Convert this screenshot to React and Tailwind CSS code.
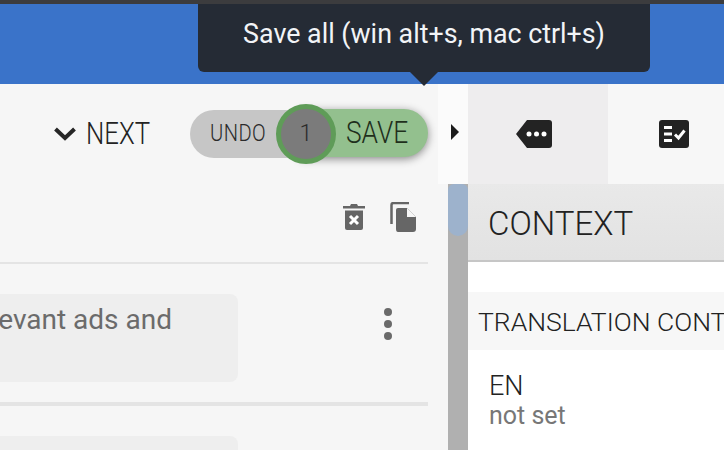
import React from "react";

const TagIcon = () => (
  <svg width="36" height="28" viewBox="0 0 36 28">
    <path d="M11 0H33Q36 0 36 3V25Q36 28 33 28H11L0 14Z" fill="#232323" />
    <circle cx="13" cy="14" r="2.500" fill="#fff" />
    <circle cx="20.500" cy="14" r="2.500" fill="#fff" />
    <circle cx="28" cy="14" r="2.500" fill="#fff" />
  </svg>
);

const ChecklistIcon = () => (
  <svg width="30" height="28" viewBox="0 0 30 28">
    <rect width="30" height="28" rx="3" fill="#232323" />
    <path d="M5 6H13V9H5ZM5 12.500H13V15.500H5ZM5 19H13V22H5Z" fill="#fff" />
    <path d="M16 14.500L19.500 18L25.500 10.500" fill="none" stroke="#fff" strokeWidth="3" />
  </svg>
);

const TrashIcon = () => (
  <svg width="22" height="28" viewBox="0 0 22 28">
    <path d="M0 4H7L8 2H14L15 4H22V6.500H0Z" fill="#666" />
    <path d="M2 8.500H20V26Q20 28 18 28H4Q2 28 2 26Z" fill="#666" />
    <path d="M7 14L15 22M15 14L7 22" stroke="#fff" strokeWidth="3" />
  </svg>
);

const CopyIcon = () => (
  <svg width="26" height="30" viewBox="0 0 26 30">
    <path d="M1.500 22V3Q1.500 1 3.500 1H19" fill="none" stroke="#666" strokeWidth="2.500" />
    <path d="M8 6H17L26 15V27Q26 30 23 30H8Q6 30 6 27V8Q6 6 8 6Z" fill="#666" />
    <path d="M17 6L26 15H17Z" fill="#f6f6f6" />
  </svg>
);

export default function App() {
  return (
    <div className="relative flex h-[450px] w-[724px] flex-col overflow-hidden bg-white font-['Roboto',sans-serif]">
      <div className="h-1 bg-[#3c3c3e]" />
      <div className="h-20 bg-[#3a73c9]" />

      {/* Tooltip */}
      <div className="absolute left-[198px] top-1 flex h-[68px] w-[452px] items-center justify-center rounded-b-md bg-[#252b35] pb-2 text-[26.8px] text-[#f2f4f7]">
        Save all (win alt+s, mac ctrl+s)
        <div className="absolute left-[212px] top-[68px] h-0 w-0 border-x-[14px] border-t-[14px] border-x-transparent border-t-[#252b35]" />
      </div>

      {/* Toolbar row */}
      <div className="flex h-[100px] shrink-0">
        <div className="flex w-[438px] shrink-0 items-center bg-[#f6f6f6] pl-[53px]">
          <svg width="24" height="16" viewBox="0 0 24 16" className="mr-[9px]">
            <path d="M2.500 3L12 12L21.500 3" fill="none" stroke="#262626" strokeWidth="4" />
          </svg>
          <span className="w-[104px] origin-left scale-x-[0.83] text-[31px] font-light text-[#232323]">NEXT</span>
          <div className="relative flex h-[60px] w-[238px] items-center">
            <div className="flex h-12 w-[110px] items-center rounded-l-full bg-[#c6c6c6] pl-5 text-[23px] font-light tracking-[0.5px] text-[#2b2b2b]">
              <span className="origin-left scale-x-[0.875]">UNDO</span>
            </div>
            <div className="-mt-[2px] flex h-12 w-[128px] items-center justify-end rounded-r-full bg-[#93c08e] pr-5 text-[31px] font-light text-[#1f2f1c] shadow-[0_2px_8px_rgba(0,0,0,0.45)]">
              <span className="origin-right scale-x-[0.85]">SAVE</span>
            </div>
            <div className="absolute left-[86px] top-0 flex h-[60px] w-[60px] items-center justify-center rounded-full border-[5px] border-[#5f9c58] bg-[#7b7b7b] text-[23px] font-light text-[#2b2b2b]">
              1
            </div>
          </div>
        </div>
        <div className="flex w-[30px] shrink-0 items-center justify-center bg-[#fbfbfb] pb-[4px] pl-1">
          <div className="h-0 w-0 border-y-[8px] border-l-[8px] border-y-transparent border-l-[#1c1c1c]" />
        </div>
        <div className="flex w-[140px] shrink-0 items-center justify-center bg-[#eeedee] pr-2">
          <TagIcon />
        </div>
        <div className="flex w-[116px] shrink-0 items-center justify-center bg-[#f7f7f7] pl-4">
          <ChecklistIcon />
        </div>
      </div>

      {/* Content row */}
      <div className="flex flex-1 overflow-hidden">
        <div className="w-[448px] shrink-0 bg-[#f6f6f6]">
          <div className="flex h-[80px] w-[428px] items-start justify-end gap-[25px] border-b-2 border-[#e4e4e4] pr-3 pt-[18px]">
            <TrashIcon />
            <CopyIcon />
          </div>
          <div className="flex h-[142px] w-[428px] items-start justify-between border-b-4 border-[#e4e4e4] pt-[30px]">
            <div className="flex h-[88px] w-[238px] justify-end overflow-hidden rounded-r-lg bg-[#eeeeee] pr-[66px] pt-2">
              <span className="whitespace-nowrap text-[28px] leading-[36px] text-[#6b6b6b]">show relevant ads and</span>
            </div>
            <div className="mr-9 mt-[14px] flex flex-col gap-[4px]">
              <div className="h-2 w-2 rounded-full bg-[#6a6a6a]" />
              <div className="h-2 w-2 rounded-full bg-[#6a6a6a]" />
              <div className="h-2 w-2 rounded-full bg-[#6a6a6a]" />
            </div>
          </div>
          <div className="mt-[30px] h-[88px] w-[238px] rounded-r-lg bg-[#eeeeee]" />
        </div>

        <div className="w-5 shrink-0 bg-[#b0b0b0]">
          <div className="h-[52px] rounded-b-[10px] rounded-t-[6px] bg-[#9db2cc]" />
        </div>

        <div className="w-[256px] shrink-0 overflow-hidden bg-white">
          <div className="flex h-[78px] items-center border-b-2 border-[#c6c6c6] bg-linear-to-b from-[#e9e9e9] to-[#e2e2e2] pl-5 pt-[3px] text-[33px] font-light text-[#222222]">
            CONTEXT
          </div>
          <div className="mt-[30px] flex h-[58px] items-center whitespace-nowrap bg-[#f7f7f7] pl-[10px] pt-[2px] text-[26.5px] font-light text-[#222222]">
            TRANSLATION CONTEXT
          </div>
          <div className="pl-[21px] pt-[21px]">
            <div className="text-[27px] font-light leading-[30px] text-[#222222]">EN</div>
            <div className="text-[25px] leading-[30px] text-[#777777]">not set</div>
          </div>
        </div>
      </div>
    </div>
  );
}
